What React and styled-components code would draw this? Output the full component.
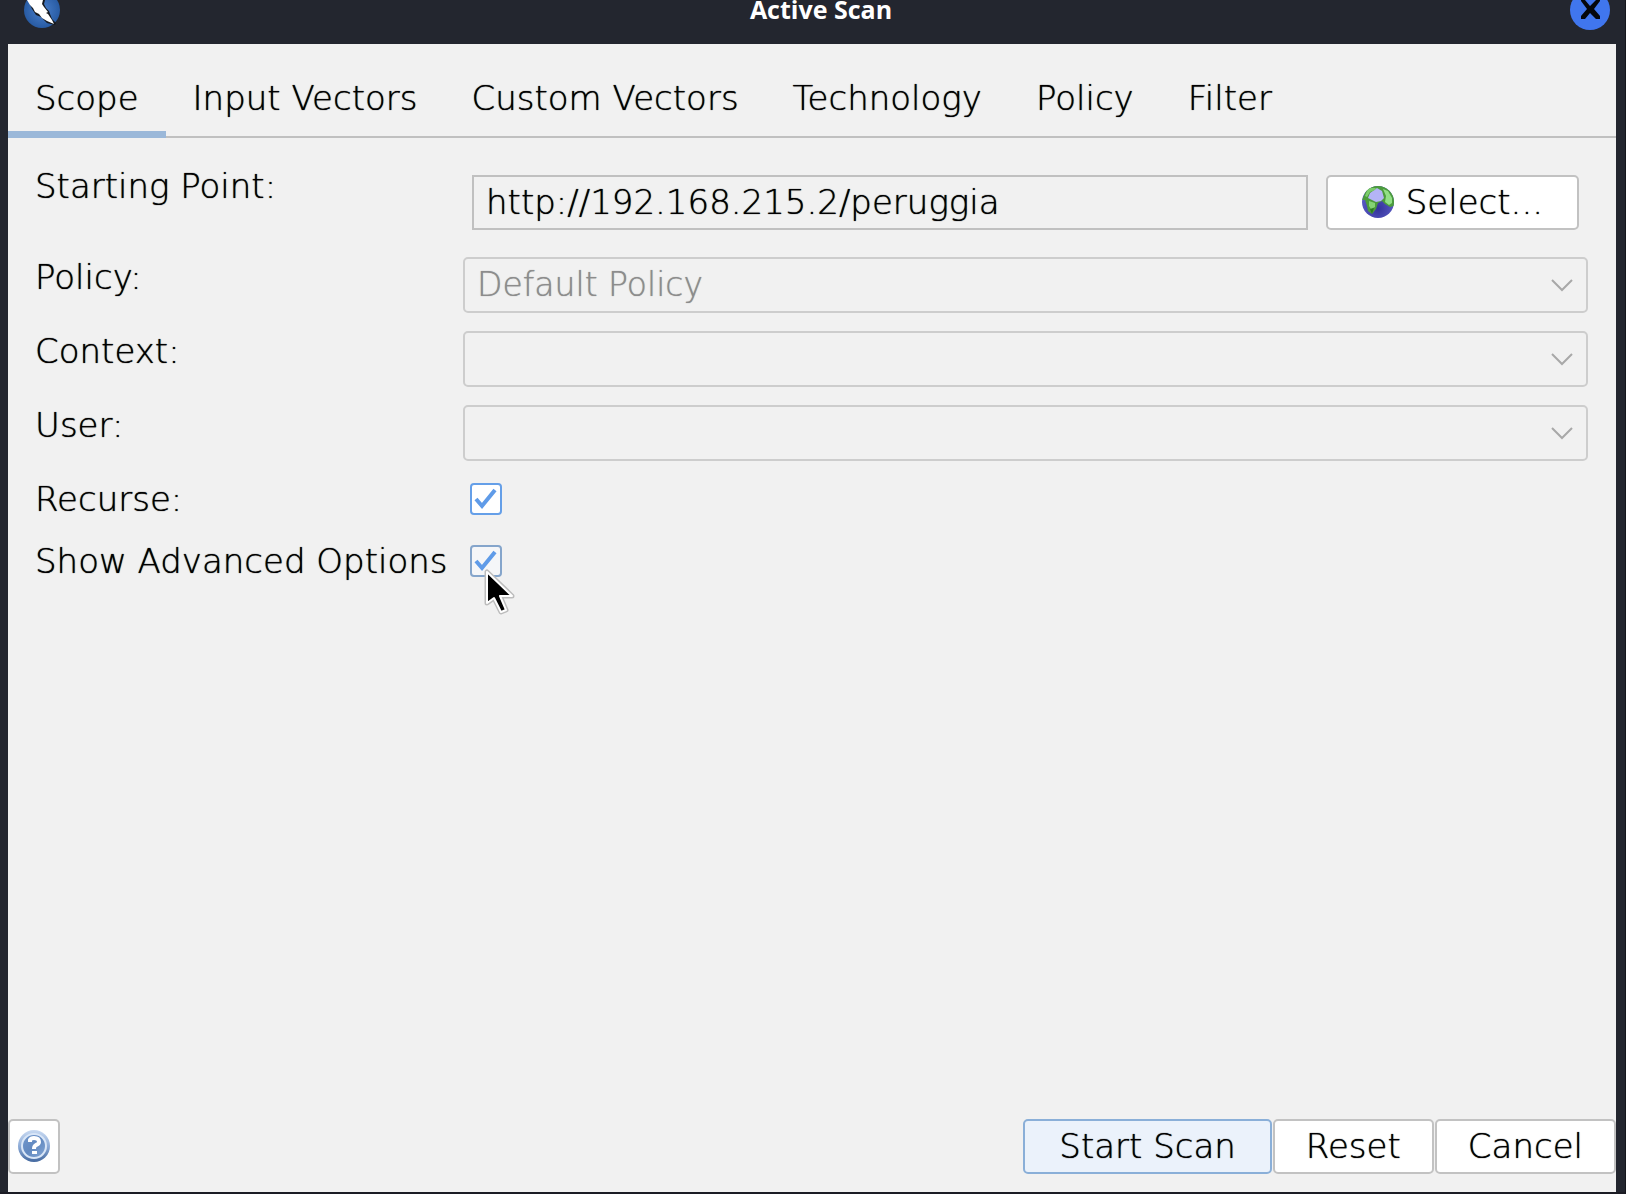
import React, { useState } from "react";
import styled, { createGlobalStyle } from "styled-components";

const GlobalStyle = createGlobalStyle`
  * {
    box-sizing: border-box;
  }

  body {
    margin: 0;
    background: #23262f;
  }

  button,
  input,
  select {
    font: inherit;
    color: inherit;
    text-shadow: inherit;
    margin: 0;
  }
`;

const Window = styled.div`
  min-height: 100vh;
  display: flex;
  flex-direction: column;
  background: #23262f;
  border-right: 1px solid #15161c;
  border-bottom: 2px solid #1b1c24;
  font-family: "DejaVu Sans", sans-serif;
  font-weight: 200;
  font-size: 34px;
  line-height: 40px;
  color: #000;
`;

const TitleBar = styled.header`
  height: 44px;
  padding: 0 14px 0 24px;
  display: flex;
  justify-content: space-between;
  align-items: flex-start;
`;

const Title = styled.h1`
  margin: 0;
  padding-left: 12px;
  font-family: "Open Sans", sans-serif;
  font-size: 25px;
  font-weight: 700;
  line-height: 18px;
  color: #fff;
`;

const CloseButton = styled.button`
  display: block;
  padding: 0;
  border: 0;
  background: none;
  line-height: 0;
`;

const Content = styled.main`
  flex: 1;
  display: flex;
  flex-direction: column;
  margin: 0 9px 0 8px;
  background: #f1f1f1;
  text-shadow: 0 0 1px currentColor;
`;

const Tabs = styled.div`
  display: flex;
  height: 94px;
  border-bottom: 2px solid #c0c0c0;
`;

const Tab = styled.button`
  height: 94px;
  padding: 20px 27px 0;
  border: 0;
  border-bottom: 7px solid ${({ $active }) => ($active ? "#9bb8d9" : "transparent")};
  background: none;
  white-space: nowrap;
`;

const Form = styled.form`
  flex: 1;
  display: flex;
  flex-direction: column;
  gap: 18px;
  padding: 28px 28px 28px 27px;
`;

const Row = styled.div`
  display: grid;
  grid-template-columns: 428px 1fr;
  align-items: start;
`;

const Label = styled.label`
  white-space: nowrap;
`;

const StartingPoint = styled.div`
  display: flex;
  gap: 18px;
  padding: 9px;
`;

const UrlInput = styled.input`
  flex: 1;
  min-width: 0;
  height: 55px;
  padding: 0 12px 2px;
  border: 2px solid #c0c0c0;
  background: #f1f1f1;
  outline: none;
`;

const Button = styled.button`
  display: flex;
  align-items: center;
  justify-content: center;
  gap: 12px;
  height: 55px;
  padding: 0 ${({ $pad }) => $pad || 31}px 2px;
  border: 2px solid ${({ $primary }) => ($primary ? "#8aafd8" : "#c2c2c2")};
  border-radius: 5px;
  background: ${({ $primary }) => ($primary ? "#ebf2fb" : "#fff")};
  white-space: nowrap;
`;

const SelectWrap = styled.div`
  display: grid;
  align-items: center;

  > * {
    grid-area: 1 / 1;
  }

  > svg {
    justify-self: end;
    margin-right: 15px;
    pointer-events: none;
  }
`;

const Select = styled.select`
  appearance: none;
  width: 100%;
  height: 56px;
  padding: 0 12px;
  border: 2px solid #cdcdcd;
  border-radius: 5px;
  background: #f1f1f1;
  font-size: 33px;
  color: #8c8c8c;
  opacity: 1;
`;

const CheckWrap = styled.div`
  position: relative;
  display: grid;
  width: 32px;
  height: 32px;
  margin: 4px 0 8px 7px;

  > * {
    grid-area: 1 / 1;
  }
`;

const Checkbox = styled.input`
  appearance: none;
  width: 32px;
  height: 32px;
  border: 2px solid ${({ $hover }) => ($hover ? "#85a5cb" : "#659fe8")};
  border-radius: 4px;
  background: ${({ $hover }) => ($hover ? "#f5f6f8" : "#fff")};
`;

const CheckMark = styled.svg`
  pointer-events: none;
`;

const Pointer = styled.svg`
  position: absolute;
  left: 12px;
  top: 22px;
  pointer-events: none;
`;

const Footer = styled.footer`
  display: flex;
  justify-content: space-between;
  padding-bottom: 18px;
`;

const Actions = styled.div`
  display: flex;
  gap: 1px;
`;

const LogoIcon = () => (
  <svg width="36" height="28" viewBox="0 0 36 28" aria-hidden="true">
    <defs>
      <radialGradient id="logo" cx="50%" cy="50%" r="50%">
        <stop offset="0" stopColor="#4a80cc" />
        <stop offset="1" stopColor="#285ba3" />
      </radialGradient>
    </defs>
    <circle cx="18" cy="10" r="18" fill="url(#logo)" />
    <path d="M0 0H4L8 9L12 15L17 17L23 23L31 25L32 23L28 19L26 14L25 11L22 8L20 4L21 0Z" fill="#15191f" />
    <path d="M3 0L6 5L9 8L11 12L15 14L18 18L23 21L30 24L28 20L24 14L22 13L24 12L20 7L18 4L19 0Z" fill="#fff" />
  </svg>
);

const CloseIcon = () => (
  <svg width="41" height="31" viewBox="0 0 41 31" aria-hidden="true">
    <circle cx="20" cy="10" r="20" fill="#4076ee" />
    <path d="M11 0V1L17 9L11 16V19H15L20 13L26 19H30V16L24 9L30 1V0H26L20 6L15 0Z" fill="#05070c" />
  </svg>
);

const GlobeIcon = () => (
  <svg width="32" height="32" viewBox="0 0 32 32" aria-hidden="true">
    <defs>
      <radialGradient id="sea" cx="50%" cy="70%" r="55%">
        <stop offset="0" stopColor="#33339a" />
        <stop offset="1" stopColor="#5a5ac4" />
      </radialGradient>
      <clipPath id="ball">
        <circle cx="16" cy="16" r="16" />
      </clipPath>
    </defs>
    <g clipPath="url(#ball)">
      <rect width="32" height="32" fill="url(#sea)" />
      <path d="M0 14L6 0H26L32 10V20L28 21L23 18L20 15L16 17L14 23L10 28L6 25L5 20L3 14Z" fill="#4c9c3c" />
      <path d="M15 2L20 5L22 12L19 15L14 16L6 12L8 7Z" fill="#b4b4f6" />
      <path d="M6 2H14L13 4L8 6L5 11L3 10Z" fill="#7ccc6c" />
      <path d="M21 3L26 5L30 12V17L27 19L23 16L24 10Z" fill="#92e086" />
      <path d="M7 15L13 17L13 21L9 23L7 20Z" fill="#84d474" />
      <path d="M8 23L12 22L10 28Z" fill="#2b7a22" />
    </g>
  </svg>
);

const HelpIcon = () => (
  <svg width="32" height="32" viewBox="0 0 32 32" aria-hidden="true">
    <defs>
      <linearGradient id="ring" x1="0" y1="0" x2="0" y2="1">
        <stop offset="0" stopColor="#c9daf2" />
        <stop offset="0.5" stopColor="#8fadd8" />
        <stop offset="1" stopColor="#43689f" />
      </linearGradient>
      <linearGradient id="disc" x1="0" y1="0" x2="1" y2="1">
        <stop offset="0" stopColor="#7298cd" />
        <stop offset="0.5" stopColor="#6289c0" />
        <stop offset="1" stopColor="#86a8d6" />
      </linearGradient>
    </defs>
    <circle cx="16" cy="16" r="16" fill="url(#ring)" />
    <circle cx="16" cy="16" r="12" fill="url(#disc)" stroke="#d9e6f7" strokeWidth="2" />
    <path d="M12 12V10Q13 8 16 8Q21 8 21 12Q21 14 18 15Q16 16 16 19" fill="none" stroke="#fff" strokeWidth="4" />
    <rect x="14" y="21" width="5" height="3" fill="#fff" />
  </svg>
);

const ChevronIcon = () => (
  <svg width="22" height="16" viewBox="0 0 22 16" aria-hidden="true">
    <path d="M1 3L11 13L21 3" fill="none" stroke="#a8a8a8" strokeWidth="2" />
  </svg>
);

const TickIcon = () => (
  <CheckMark width="32" height="32" viewBox="0 0 32 32" aria-hidden="true">
    <path d="M6 16L12 23L25 7" fill="none" stroke="#5f9be8" strokeWidth="4" />
  </CheckMark>
);

const PointerIcon = () => (
  <Pointer width="36" height="50" viewBox="0 0 36 50" aria-hidden="true">
    <path
      d="M5 5V36L12 31L19 45L24 43L18 29H30Z"
      fill="none"
      stroke="#bdbdbd"
      strokeWidth="5"
      strokeLinejoin="round"
    />
    <path
      d="M5 5V36L12 31L19 45L24 43L18 29H30Z"
      fill="#000"
      stroke="#fff"
      strokeWidth="2"
      strokeLinejoin="round"
    />
  </Pointer>
);

const tabs = ["Scope", "Input Vectors", "Custom Vectors", "Technology", "Policy", "Filter"];

const selects = [
  { id: "policy", label: "Policy:", value: "Default Policy" },
  { id: "context", label: "Context:", value: "" },
  { id: "user", label: "User:", value: "" },
];

const App = () => {
  const [activeTab, setActiveTab] = useState("Scope");
  const [recurse, setRecurse] = useState(true);
  const [advanced, setAdvanced] = useState(true);

  return (
    <Window>
      <GlobalStyle />
      <TitleBar>
        <LogoIcon />
        <Title>Active Scan</Title>
        <CloseButton type="button" aria-label="Close">
          <CloseIcon />
        </CloseButton>
      </TitleBar>
      <Content>
        <Tabs role="tablist">
          {tabs.map((tab) => (
            <Tab
              key={tab}
              type="button"
              role="tab"
              aria-selected={activeTab === tab}
              $active={activeTab === tab}
              onClick={() => setActiveTab(tab)}
            >
              {tab}
            </Tab>
          ))}
        </Tabs>
        <Form>
          <Row>
            <Label htmlFor="url">Starting Point:</Label>
            <StartingPoint>
              <UrlInput id="url" type="text" readOnly value="http://192.168.215.2/peruggia" />
              <Button type="button" $pad={34}>
                <GlobeIcon />
                Select...
              </Button>
            </StartingPoint>
          </Row>
          {selects.map(({ id, label, value }) => (
            <Row key={id}>
              <Label htmlFor={id}>{label}</Label>
              <SelectWrap>
                <Select id={id} disabled defaultValue={value}>
                  <option value={value}>{value}</option>
                </Select>
                <ChevronIcon />
              </SelectWrap>
            </Row>
          ))}
          <Row>
            <Label htmlFor="recurse">Recurse:</Label>
            <CheckWrap>
              <Checkbox
                id="recurse"
                type="checkbox"
                checked={recurse}
                onChange={(e) => setRecurse(e.target.checked)}
              />
              {recurse && <TickIcon />}
            </CheckWrap>
          </Row>
          <Row>
            <Label htmlFor="advanced">Show Advanced Options</Label>
            <CheckWrap>
              <Checkbox
                id="advanced"
                type="checkbox"
                $hover
                checked={advanced}
                onChange={(e) => setAdvanced(e.target.checked)}
              />
              {advanced && <TickIcon />}
              <PointerIcon />
            </CheckWrap>
          </Row>
        </Form>
        <Footer>
          <Button type="button" $pad={8} aria-label="Help">
            <HelpIcon />
          </Button>
          <Actions>
            <Button type="button" $primary $pad={34}>
              Start Scan
            </Button>
            <Button type="button">Reset</Button>
            <Button type="button">Cancel</Button>
          </Actions>
        </Footer>
      </Content>
    </Window>
  );
};

export default App;
